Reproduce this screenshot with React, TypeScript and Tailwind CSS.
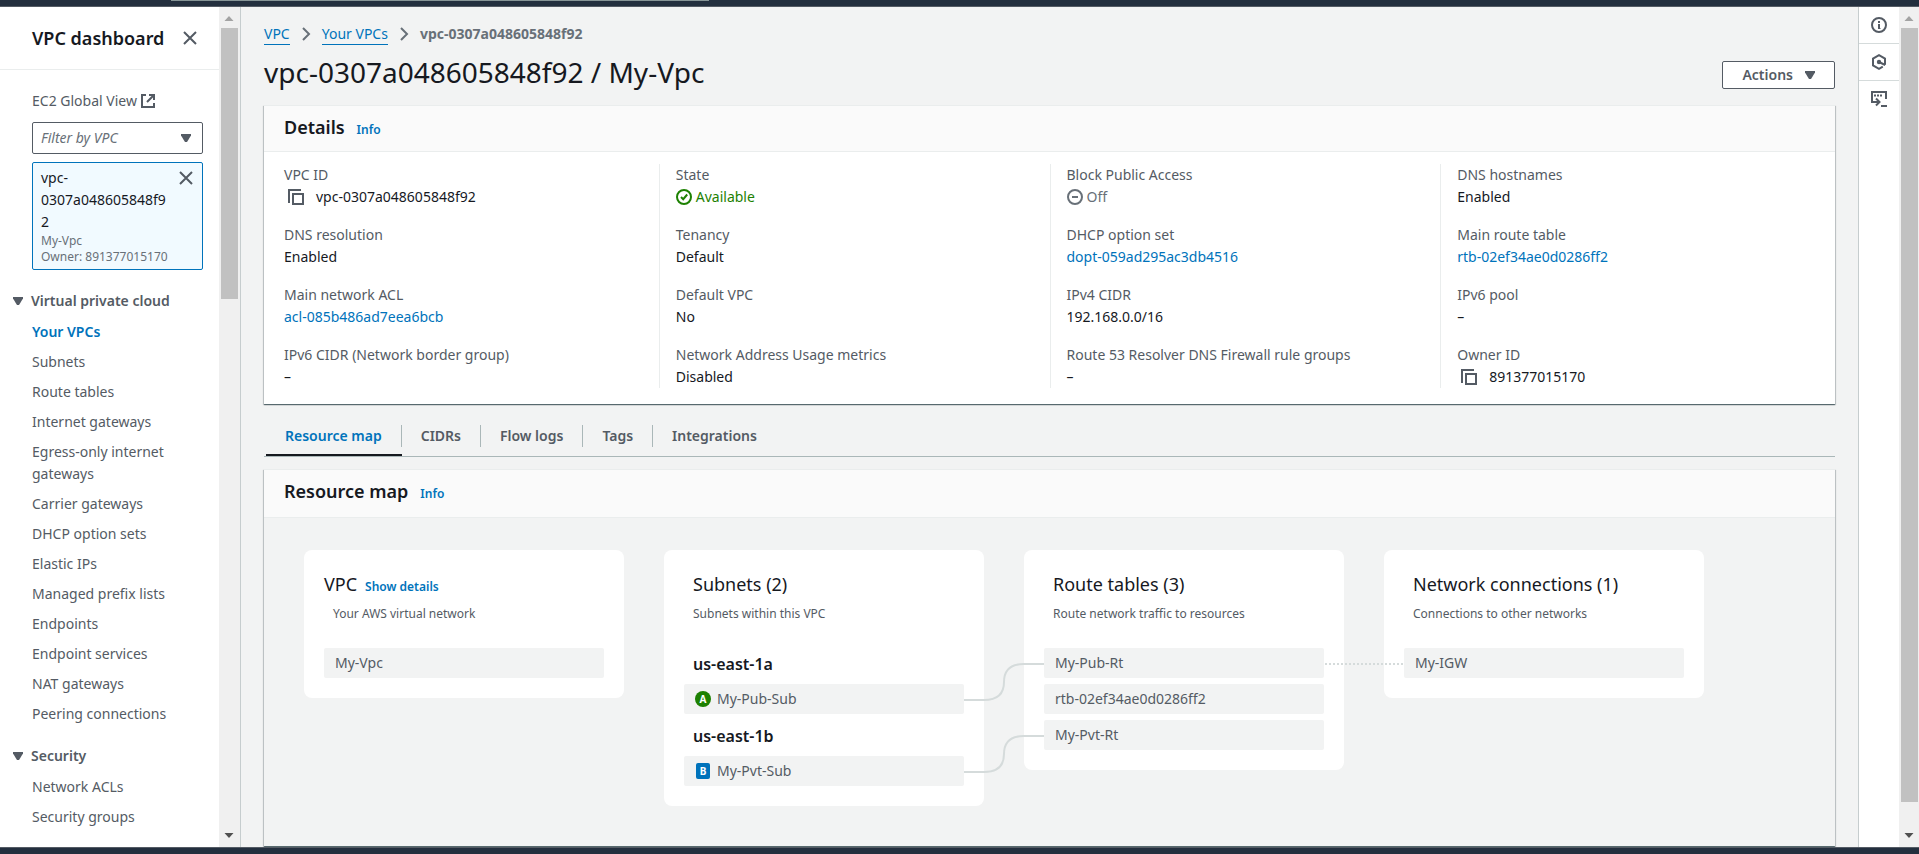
import type { ReactNode } from "react";

const FONT = "font-['Noto_Sans','Open_Sans',sans-serif]";

const vpcLinks = [
  "Your VPCs",
  "Subnets",
  "Route tables",
  "Internet gateways",
  "Egress-only internet gateways",
  "Carrier gateways",
  "DHCP option sets",
  "Elastic IPs",
  "Managed prefix lists",
  "Endpoints",
  "Endpoint services",
  "NAT gateways",
  "Peering connections",
];
const securityLinks = ["Network ACLs", "Security groups"];

type Field = { label: string; value: string; kind?: "link" | "copy" | "ok" | "off" };

const columns: Field[][] = [
  [
    { label: "VPC ID", value: "vpc-0307a048605848f92", kind: "copy" },
    { label: "DNS resolution", value: "Enabled" },
    { label: "Main network ACL", value: "acl-085b486ad7eea6bcb", kind: "link" },
    { label: "IPv6 CIDR (Network border group)", value: "–" },
  ],
  [
    { label: "State", value: "Available", kind: "ok" },
    { label: "Tenancy", value: "Default" },
    { label: "Default VPC", value: "No" },
    { label: "Network Address Usage metrics", value: "Disabled" },
  ],
  [
    { label: "Block Public Access", value: "Off", kind: "off" },
    { label: "DHCP option set", value: "dopt-059ad295ac3db4516", kind: "link" },
    { label: "IPv4 CIDR", value: "192.168.0.0/16" },
    { label: "Route 53 Resolver DNS Firewall rule groups", value: "–" },
  ],
  [
    { label: "DNS hostnames", value: "Enabled" },
    { label: "Main route table", value: "rtb-02ef34ae0d0286ff2", kind: "link" },
    { label: "IPv6 pool", value: "–" },
    { label: "Owner ID", value: "891377015170", kind: "copy" },
  ],
];

const tabs = ["Resource map", "CIDRs", "Flow logs", "Tags", "Integrations"];

function Caret({ className = "" }: { className?: string }) {
  return (
    <svg viewBox="0 0 10 8" className={`h-2 w-[10px] shrink-0 fill-[#545b64] ${className}`} aria-hidden="true">
      <path d="M0 0h10v1.5L6 8H4L0 1.5z" />
    </svg>
  );
}

function Close() {
  return (
    <svg viewBox="0 0 16 16" className="size-4" fill="none" stroke="#545b64" strokeWidth="2" aria-hidden="true">
      <path d="M2 2l12 12M14 2L2 14" />
    </svg>
  );
}

function Chevron() {
  return (
    <svg viewBox="0 0 16 16" className="size-4" fill="none" stroke="#687078" strokeWidth="2" aria-hidden="true">
      <path d="M5 2l6 6-6 6" />
    </svg>
  );
}

function CopyIcon() {
  return (
    <svg viewBox="0 0 16 16" className="size-4" fill="none" stroke="#545b64" strokeWidth="2" aria-hidden="true">
      <path d="M1 14V1h12" />
      <path d="M5 5h10v10H5z" />
    </svg>
  );
}

function External() {
  return (
    <svg viewBox="0 0 16 16" className="size-4" fill="none" stroke="#545b64" strokeWidth="2" aria-hidden="true">
      <path d="M6 2H2v12h12v-4" />
      <path d="M9 2h5v5M13.500 2.500L7 9" />
    </svg>
  );
}

function Scrollbar({ width, track, thumb }: { width: string; track: string; thumb: string }) {
  return (
    <div className={`flex shrink-0 flex-col bg-[#f0f0f0] ${width}`} aria-hidden="true">
      <svg viewBox="0 0 20 21" className="h-[21px] w-5 fill-[#a3a3a3]">
        <path d="M5.500 14L10 9l4.500 5z" />
      </svg>
      <div className={`flex-1 ${track}`}>
        <div className={`bg-[#c1c1c1] ${thumb}`} />
      </div>
      <svg viewBox="0 0 20 21" className="h-[21px] w-5 fill-[#505050]">
        <path d="M5.500 7L10 12l4.500-5z" />
      </svg>
    </div>
  );
}

function NavGroup({ title, links, active }: { title: string; links: string[]; active?: string }) {
  return (
    <section>
      <button
        type="button"
        className="flex w-full items-center gap-2 pl-[13px] leading-[22px] font-semibold text-[#545b64]"
      >
        <Caret />
        {title}
      </button>
      <ul className="mt-[9px] flex flex-col gap-2 pr-8 pl-8">
        {links.map((l) => (
          <li key={l}>
            <a href="#" className={l === active ? "block font-semibold text-[#0073bb]" : "block text-[#545b64]"}>
              {l}
            </a>
          </li>
        ))}
      </ul>
    </section>
  );
}

function Sidebar() {
  return (
    <div className="flex w-60 shrink-0">
      <nav className="min-w-0 flex-1 overflow-hidden bg-white">
        <div className="flex h-[63px] items-center justify-between border-b border-[#eaeded] pr-[21px] pl-8">
          <h2 className="text-lg font-semibold text-[#16191f]">VPC dashboard</h2>
          <button type="button" aria-label="Close navigation">
            <Close />
          </button>
        </div>
        <div className="px-8 pt-5">
          <a href="#" className="flex items-center gap-[3px] leading-[22px] text-[#545b64]">
            EC2 Global View <External />
          </a>
        </div>
        <div className="mt-[10px] pr-4 pl-8">
          <div className="grid items-center">
            <select
              aria-label="Filter by VPC"
              className="col-start-1 row-start-1 h-8 w-full appearance-none rounded-[2px] border border-[#545b64] bg-white px-2 text-[#687078] italic"
            >
              <option>Filter by VPC</option>
            </select>
            <Caret className="pointer-events-none col-start-1 row-start-1 mr-3 justify-self-end" />
          </div>
          <div className="mt-2 flex items-start justify-between rounded-[2px] border border-[#0073bb] bg-[#f1faff] px-2 py-1">
            <div className="min-w-0 text-[#16191f]">
              <div className="w-[130px] leading-[22px] break-all">
                vpc-
                <br />
                0307a048605848f92
              </div>
              <div className="text-xs leading-4 text-[#687078]">My-Vpc</div>
              <div className="text-xs leading-4 whitespace-nowrap text-[#687078]">Owner: 891377015170</div>
            </div>
            <button type="button" aria-label="Clear VPC filter" className="mt-[3px] -ml-4">
              <Close />
            </button>
          </div>
        </div>
        <div className="mt-5 flex flex-col gap-5">
          <NavGroup title="Virtual private cloud" links={vpcLinks} active="Your VPCs" />
          <NavGroup title="Security" links={securityLinks} />
        </div>
      </nav>
      <Scrollbar width="w-[21px]" track="px-[2px]" thumb="h-[34%]" />
    </div>
  );
}

function FieldValue({ value, kind }: Field) {
  if (kind === "link")
    return (
      <a href="#" className="text-[#0073bb]">
        {value}
      </a>
    );
  if (kind === "copy")
    return (
      <span className="flex items-center gap-3 pl-1">
        <button type="button" aria-label={`Copy ${value}`}>
          <CopyIcon />
        </button>
        {value}
      </span>
    );
  if (kind === "ok")
    return (
      <span className="flex items-center gap-1 text-[#1d8102]">
        <svg viewBox="0 0 16 16" className="size-4" fill="none" stroke="currentColor" strokeWidth="2" aria-hidden="true">
          <circle cx="8" cy="8" r="7" />
          <path d="M5 8l2.200 2.200L11.200 5.500" />
        </svg>
        {value}
      </span>
    );
  if (kind === "off")
    return (
      <span className="flex items-center gap-1 text-[#687078]">
        <svg viewBox="0 0 16 16" className="size-4" fill="none" stroke="currentColor" strokeWidth="2" aria-hidden="true">
          <circle cx="8" cy="8" r="7" />
          <path d="M5 8h6" />
        </svg>
        {value}
      </span>
    );
  return <>{value}</>;
}

function Panel({
  title,
  children,
  className = "",
  headerClass,
}: {
  title: string;
  children: ReactNode;
  className?: string;
  headerClass: string;
}) {
  return (
    <section
      className={`flex flex-col border-t border-[#eaeded] shadow-[0_1px_1px_0_rgba(0,28,36,0.5),1px_1px_1px_0_rgba(0,28,36,0.15),-1px_1px_1px_0_rgba(0,28,36,0.15)] ${className}`}
    >
      <header className={`flex items-baseline gap-3 border-b border-[#eaeded] bg-[#fafafa] px-5 ${headerClass}`}>
        <h2 className="text-lg leading-7 font-semibold text-[#16191f]">{title}</h2>
        <a href="#" className="text-xs font-semibold text-[#0073bb]">
          Info
        </a>
      </header>
      {children}
    </section>
  );
}

function Card({ title, note, action, children }: { title: string; note: string; action?: string; children: ReactNode }) {
  return (
    <article className="w-80 rounded-lg bg-white p-5">
      <div className={`flex items-baseline gap-2 ${action ? "" : "pl-[9px]"}`}>
        <h3 className="text-lg leading-7 text-[#16191f]">{title}</h3>
        {action && (
          <a href="#" className="text-xs font-semibold text-[#0073bb]">
            {action}
          </a>
        )}
      </div>
      <p className="mt-[6px] pl-[9px] text-xs leading-5 text-[#545b64]">{note}</p>
      <div className="mt-6 flex flex-col gap-[6px]">{children}</div>
    </article>
  );
}

function Resource({ name, zone }: { name: string; zone?: "A" | "B" }) {
  return (
    <div className="flex h-[30px] items-center rounded-[2px] bg-[#f2f3f3] px-[11px] text-[#545b64]">
      {zone && (
        <span className="mr-[6px] flex w-4 justify-center">
          <span
            className={`flex h-4 items-center justify-center text-[10px] leading-none font-bold text-white ${
              zone === "A" ? "w-4 rounded-full bg-[#1d8102]" : "w-[14px] rounded-[2px] bg-[#0073bb]"
            }`}
          >
            {zone}
          </span>
        </span>
      )}
      {name}
    </div>
  );
}

function Zone({ name }: { name: string }) {
  return <h4 className="h-[30px] pl-[9px] text-base leading-8 font-semibold text-[#16191f]">{name}</h4>;
}

function ResourceMap() {
  return (
    <div className="relative flex flex-1 items-start gap-10 px-10 pt-8 pb-10">
      <Card title="VPC" note="Your AWS virtual network" action="Show details">
        <Resource name="My-Vpc" />
      </Card>
      <Card title="Subnets (2)" note="Subnets within this VPC">
        <Zone name="us-east-1a" />
        <Resource name="My-Pub-Sub" zone="A" />
        <Zone name="us-east-1b" />
        <Resource name="My-Pvt-Sub" zone="B" />
      </Card>
      <Card title="Route tables (3)" note="Route network traffic to resources">
        <Resource name="My-Pub-Rt" />
        <Resource name="rtb-02ef34ae0d0286ff2" />
        <Resource name="My-Pvt-Rt" />
      </Card>
      <Card title="Network connections (1)" note="Connections to other networks">
        <Resource name="My-IGW" />
      </Card>
      <svg
        className="pointer-events-none absolute top-0 left-0 h-[300px] w-[1480px]"
        viewBox="0 0 1480 300"
        fill="none"
        stroke="#d5dbdb"
        strokeWidth="2"
        aria-hidden="true"
      >
        <path d="M700 182h20q20 0 20-18t20-18h20" />
        <path d="M700 254h20q20 0 20-18t20-18h20" />
        <path d="M1061 146h79" strokeDasharray="2 2" />
      </svg>
    </div>
  );
}

function ToolRail() {
  return (
    <aside className="flex w-[41px] shrink-0 flex-col border-l border-[#c6cdce] bg-white">
      <button
        type="button"
        aria-label="Help panel"
        className="flex h-[37px] w-full items-center justify-center border-b border-[#d5dbdb]"
      >
        <svg viewBox="0 0 16 16" className="size-4" fill="none" stroke="#545b64" strokeWidth="2" aria-hidden="true">
          <circle cx="8" cy="8" r="7" />
          <path d="M8 7v5M8 4v2" />
          <path d="M7 7.500h1M7 11.500h2.500" strokeWidth="1" />
        </svg>
      </button>
      <button
        type="button"
        aria-label="Diagnostics"
        className="flex h-[37px] w-full items-center justify-center border-b border-[#d5dbdb]"
      >
        <svg viewBox="0 0 16 16" className="size-4" fill="none" stroke="#545b64" strokeWidth="2" aria-hidden="true">
          <path d="M14 10.800V4.500L8 1.200 2 4.500v7l6 3.300 3.800-2.100" />
          <circle cx="8" cy="8" r="2.200" fill="#545b64" stroke="none" />
          <path d="M8 8l6.200 3" />
        </svg>
      </button>
      <button type="button" aria-label="CloudShell" className="flex h-9 w-full items-center justify-center">
        <svg viewBox="0 0 16 16" className="size-4" fill="none" stroke="#545b64" strokeWidth="2" aria-hidden="true">
          <path d="M4 11H1V1h14v7" />
          <path d="M3 4.500h8" strokeDasharray="2 1" />
          <path d="M3 11h5M5 7.500L8.500 11 5 14.500M10 15h6" />
        </svg>
      </button>
    </aside>
  );
}

export default function App() {
  return (
    <div className={`${FONT} flex h-screen flex-col overflow-hidden bg-[#f2f3f3] text-sm leading-[22px] text-[#16191f]`}>
      <div className="h-[7px] shrink-0 border-b border-[#545b64] bg-[#232f3e]">
        <div className="ml-[171px] h-px w-[538px] bg-[#879596]" />
      </div>
      <div className="flex min-h-0 flex-1">
        <Sidebar />
        <main className="flex min-w-0 flex-1 flex-col border-l border-[#c6cdce] px-[23px]">
          <nav aria-label="Breadcrumb" className="mt-4 flex items-center gap-2">
            <a href="#" className="border-b border-[#0073bb] leading-5 text-[#0073bb]">
              VPC
            </a>
            <Chevron />
            <a href="#" className="border-b border-[#0073bb] leading-5 text-[#0073bb]">
              Your VPCs
            </a>
            <Chevron />
            <span className="font-bold text-[#687078]">vpc-0307a048605848f92</span>
          </nav>
          <div className="mt-[11px] flex items-end justify-between pb-4">
            <h1 className="text-[28px] leading-[33px] text-[#16191f]">vpc-0307a048605848f92 / My-Vpc</h1>
            <button
              type="button"
              className="flex h-7 items-center gap-3 rounded-[2px] border border-[#545b64] bg-white px-[19px] font-semibold text-[#545b64]"
            >
              Actions <Caret />
            </button>
          </div>

          <Panel title="Details" className="shrink-0 bg-white" headerClass="pt-[7px] pb-[10px]">
            <div className="grid grid-cols-4 px-1 pt-3 pb-4">
              {columns.map((fields, i) => (
                <dl key={i} className={`flex flex-col gap-4 px-4 ${i === 0 ? "" : "border-l border-[#eaeded]"}`}>
                  {fields.map((f) => (
                    <div key={f.label}>
                      <dt className="text-[#545b64]">{f.label}</dt>
                      <dd>
                        <FieldValue {...f} />
                      </dd>
                    </div>
                  ))}
                </dl>
              ))}
            </div>
          </Panel>

          <div role="tablist" className="mt-4 flex shrink-0 border-b border-[#aab7b8] pl-[2px]">
            {tabs.map((t, i) => (
              <button
                key={t}
                type="button"
                role="tab"
                aria-selected={i === 0}
                className={`flex h-9 items-start border-b-2 font-semibold ${
                  i === 0 ? "border-[#16191f] text-[#0073bb]" : "border-transparent text-[#545b64]"
                }`}
              >
                <span className={`mt-[5px] px-[19px] ${i < tabs.length - 1 ? "border-r border-[#aab7b8]" : ""}`}>
                  {t}
                </span>
              </button>
            ))}
          </div>

          <Panel title="Resource map" className="mt-3 mb-px flex-1" headerClass="pt-[7px] pb-3">
            <ResourceMap />
          </Panel>
        </main>
        <ToolRail />
        <Scrollbar width="w-5" track="pl-[2px] pr-px" thumb="h-[97%]" />
      </div>
      <div className="h-[7px] shrink-0 border-t border-[#545b64] bg-[#232f3e]" />
    </div>
  );
}
